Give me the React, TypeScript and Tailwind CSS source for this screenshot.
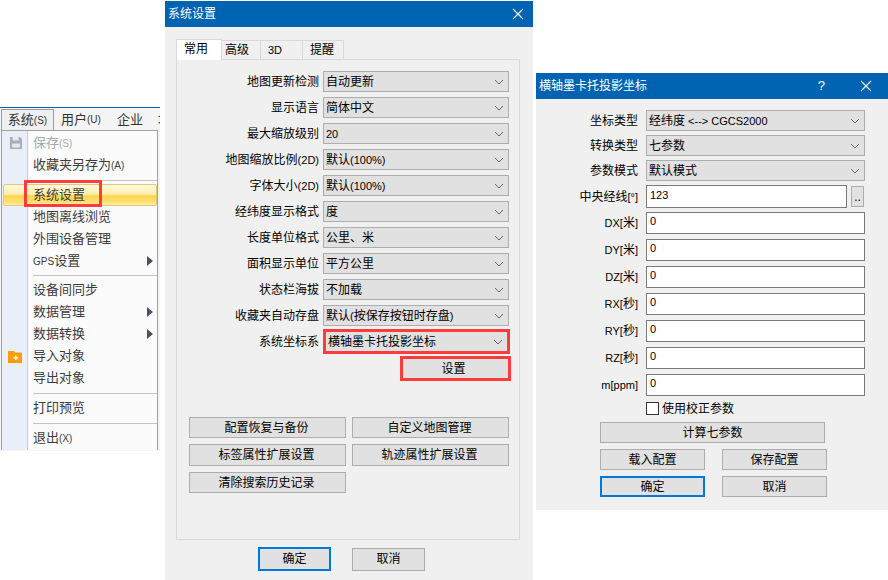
import { Fragment } from 'react';

const FONT = "font-['Liberation_Sans','Noto_Sans_CJK_SC',sans-serif]";

const GENERAL_ROWS = [
  { label: '地图更新检测', value: '自动更新' },
  { label: '显示语言', value: '简体中文' },
  { label: '最大缩放级别', value: '20' },
  { label: '地图缩放比例(2D)', value: '默认(100%)' },
  { label: '字体大小(2D)', value: '默认(100%)' },
  { label: '经纬度显示格式', value: '度' },
  { label: '长度单位格式', value: '公里、米' },
  { label: '面积显示单位', value: '平方公里' },
  { label: '状态栏海拔', value: '不加载' },
  { label: '收藏夹自动存盘', value: '默认(按保存按钮时存盘)' },
];

const PARAMS = ['DX[米]', 'DY[米]', 'DZ[米]', 'RX[秒]', 'RY[秒]', 'RZ[秒]', 'm[ppm]'];

// latin runs are a bit smaller than the CJK in these dialogs
function Txt({ text }: { text: string }) {
  const parts = text.split(/([\x20-\x7e°]+)/).filter(Boolean);
  return (
    <>
      {parts.map((part, i) =>
        /^[\x20-\x7e°]+$/.test(part) ? (
          <span key={i} className="text-[11px]">{part}</span>
        ) : (
          <Fragment key={i}>{part}</Fragment>
        ),
      )}
    </>
  );
}

function Chevron() {
  return (
    <svg width="10" height="6" viewBox="0 0 10 6" className="shrink-0">
      <path d="M1 1 L5 5 L9 1" fill="none" stroke="#666" strokeWidth="1" />
    </svg>
  );
}

function Select({ value, className }: { value: React.ReactNode; className: string }) {
  return (
    <div className={`flex items-center justify-between bg-[#e1e1e1] pl-[2px] pr-[4px] text-[12px] text-black ${className}`}>
      <span className="whitespace-nowrap">{value}</span>
      <Chevron />
    </div>
  );
}

function Btn({ text, className }: { text: string; className: string }) {
  return (
    <div className={`flex items-center justify-center bg-[#e1e1e1] text-[12px] text-black ${className}`}>
      {text}
    </div>
  );
}

function Input({ value, className }: { value: string; className: string }) {
  return (
    <div className={`flex items-center border border-[#7a7a7a] bg-white pb-[3px] pl-[3px] text-[11px] text-black ${className}`}>
      {value}
    </div>
  );
}

function TitleBar({ title, help }: { title: string; help?: boolean }) {
  return (
    <div className="flex h-[26px] shrink-0 items-center bg-[#0063b1] pl-[3px] text-[12px] text-white">
      <span className="flex-1">{title}</span>
      {help && <span className="mr-[35px] text-[13px]">?</span>}
      <svg width="12" height="12" viewBox="0 0 12 12" className={help ? 'mr-[16px]' : 'mr-[9px]'}>
        <path d="M1 1 L11 11 M11 1 L1 11" stroke="#fff" strokeWidth="1.1" />
      </svg>
    </div>
  );
}

function MenuItem({ text, hint, disabled, arrow, icon, active }: { text: React.ReactNode; hint?: string; disabled?: boolean; arrow?: boolean; icon?: React.ReactNode; active?: boolean }) {
  return (
    <div className="relative flex h-[22px] items-center">
      {active && (
        <div className="absolute inset-y-0 left-[1px] right-0 rounded-[2px] border border-[#e3c878] bg-[linear-gradient(#fff9dd_0%,#ffeeb0_45%,#ffd54f_55%,#ffdf70_85%,#fff0b8_100%)]" />
      )}
      <div className="relative flex w-[27px] shrink-0 justify-center">{icon}</div>
      <span className={`relative ml-[4px] text-[13px] ${disabled ? 'text-[#a8a8a8]' : 'text-[#3c3c3c]'}`}>
        {text}
        {hint && <span className="text-[10px]">{hint}</span>}
      </span>
      {arrow && (
        <svg width="6" height="10" viewBox="0 0 6 10" className="absolute left-[145px]">
          <path d="M0 0 L6 5 L0 10 Z" fill="#4a5060" />
        </svg>
      )}
    </div>
  );
}

function Sep({ className }: { className: string }) {
  return (
    <div className={`flex items-center pl-[31px] ${className}`}>
      <div className="h-px w-full bg-[#c4c4c4]" />
    </div>
  );
}

function SaveIcon() {
  return (
    <svg width="14" height="14" viewBox="0 0 14 14">
      <path d="M1 1 H11 L13 3 V13 H1 Z" fill="#a9adb2" />
      <rect x="3.5" y="1" width="6" height="3.5" fill="#e8eaec" />
      <rect x="3" y="7.5" width="8" height="4" fill="#e8eaec" />
    </svg>
  );
}

function FolderIcon() {
  return (
    <svg width="15" height="13" viewBox="0 0 15 13">
      <path d="M0 1 H6 L7.5 2.5 H14 V13 H0 Z" fill="#ff9d0a" />
      <path d="M7 5.5 H8.5 V7 H10 V8.5 H8.5 V10 H7 V8.5 H5.5 V7 H7 Z" fill="#fff" />
    </svg>
  );
}

function SystemMenu() {
  return (
    <div className="absolute left-0 top-[107px] h-[344px] w-[160px] overflow-hidden bg-[#f4f4f4]">
      <div className="h-px w-full bg-[#0063b1]" />
      <div className="flex h-[22px] items-end whitespace-nowrap pl-[1px] text-[13px] text-[#333]">
        <div className="flex h-[21px] w-[53px] shrink-0 items-center justify-center border border-b-0 border-[#9a9ea4] bg-[#eef0f2]">
          系统<span className="text-[10px]">(S)</span>
        </div>
        <div className="ml-[7px] flex h-[21px] shrink-0 items-center">
          用户<span className="text-[10px]">(U)</span>
        </div>
        <div className="ml-[16px] flex h-[21px] shrink-0 items-center">企业</div>
        <div className="ml-[15px] flex h-[21px] shrink-0 items-center">地</div>
      </div>
      <div className="relative ml-[1px] h-[320px] w-[157px] border-x border-t border-[#a0a0a0] bg-[#fbfbfb] pt-[1px]">
        <div className="absolute inset-y-0 left-0 w-[26px] bg-[#e9eff8]" />
        <div className="absolute inset-y-0 left-[25px] w-px bg-[#c9ccd2]" />
        <MenuItem text="保存" hint="(S)" disabled icon={<SaveIcon />} />
        <MenuItem text="收藏夹另存为" hint="(A)" />
        <Sep className="h-[8px]" />
        <MenuItem text="系统设置" active />
        <MenuItem text="地图离线浏览" />
        <MenuItem text="外围设备管理" />
        <MenuItem text={<><span className="text-[10px]">GPS</span>设置</>} arrow />
        <Sep className="h-[7px]" />
        <MenuItem text="设备间同步" />
        <MenuItem text="数据管理" arrow />
        <MenuItem text="数据转换" arrow />
        <MenuItem text="导入对象" icon={<FolderIcon />} />
        <MenuItem text="导出对象" />
        <Sep className="h-[8px]" />
        <MenuItem text="打印预览" />
        <Sep className="h-[8px]" />
        <MenuItem text="退出" hint="(X)" />
      </div>
      <div className="absolute left-[24px] top-[73px] h-[27px] w-[78px] border-[3px] border-[#ff3b3b]" />
    </div>
  );
}

function SettingsDialog() {
  return (
    <div className="absolute left-[165px] top-[1px] flex h-[579px] w-[368px] flex-col bg-[#f0f0f0]">
      <TitleBar title="系统设置" />
      <div className="ml-[11px] mt-[11px] flex h-[21px] items-end text-[12px] text-black">
        <div className="z-10 -mb-px flex h-[21px] w-[46px] items-center border border-b-0 border-[#d9d9d9] bg-white pb-[2px] pl-[7px]">常用</div>
        <div className="flex h-[19px] w-[39px] items-center border border-b-0 border-l-0 border-[#d9d9d9] pl-[3px]">高级</div>
        <div className="flex h-[19px] w-[42px] items-center border border-b-0 border-l-0 border-[#d9d9d9] pl-[7px] text-[11px]">3D</div>
        <div className="flex h-[19px] w-[41px] items-center border border-b-0 border-l-0 border-[#d9d9d9] pl-[7px]">提醒</div>
      </div>
      <div className="ml-[11px] flex h-[481px] w-[344px] flex-col border border-[#d9d9d9] pt-[11px]">
        <div className="flex flex-col gap-[5px]">
          {GENERAL_ROWS.map((row) => (
            <div key={row.label} className="flex h-[21px] items-center text-[12px] text-black">
              <div className="w-[142px] text-right"><Txt text={row.label} /></div>
              <Select value={<Txt text={row.value} />} className="ml-[4px] h-[21px] w-[186px] border border-[#adadad]" />
            </div>
          ))}
          <div className="flex h-[21px] items-center text-[12px] text-black">
            <div className="w-[142px] text-right">系统坐标系</div>
            <Select value="横轴墨卡托投影坐标" className="-my-[2px] ml-[4px] h-[25px] w-[187px] border-[3px] border-[#ff3b3b] pl-0 pr-[2px]" />
          </div>
        </div>
        <Btn text="设置" className="ml-[223px] mt-[4px] h-[25px] w-[111px] border-[3px] border-[#ff3b3b] pr-[4px]" />
        <div className="ml-[12px] mt-[36px] grid w-[320px] grid-cols-[157px_157px] gap-x-[6px] gap-y-[6px]">
          <Btn text="配置恢复与备份" className="h-[21px] border border-[#adadad] pr-[2px]" />
          <Btn text="自定义地图管理" className="h-[21px] border border-[#adadad] pr-[2px]" />
          <Btn text="标签属性扩展设置" className="h-[22px] border border-[#adadad] pr-[2px]" />
          <Btn text="轨迹属性扩展设置" className="h-[22px] border border-[#adadad] pr-[2px]" />
          <Btn text="清除搜索历史记录" className="h-[21px] border border-[#adadad] pr-[2px]" />
        </div>
      </div>
      <div className="ml-[93px] mt-[7px] flex items-center gap-[21px]">
        <Btn text="确定" className="h-[24px] w-[73px] border-2 border-[#0078d7]" />
        <Btn text="取消" className="h-[23px] w-[73px] border border-[#adadad]" />
      </div>
    </div>
  );
}

function FieldRow({ label, children, className }: { label: string; children: React.ReactNode; className?: string }) {
  return (
    <div className={`flex items-center text-[12px] text-black ${className ?? ''}`}>
      <div className="w-[102px] whitespace-nowrap text-right"><Txt text={label} /></div>
      <div className="ml-[8px] flex items-center">{children}</div>
    </div>
  );
}

function ProjectionDialog() {
  return (
    <div className="absolute left-[536px] top-[73px] flex h-[437px] w-[352px] flex-col bg-[#f0f0f0]">
      <TitleBar title="横轴墨卡托投影坐标" help />
      <div className="mt-[11px] flex flex-col gap-[4px]">
        <FieldRow label="坐标类型">
          <Select value={<Txt text="经纬度 <--> CGCS2000" />} className="h-[21px] w-[219px] border border-[#adadad]" />
        </FieldRow>
        <FieldRow label="转换类型">
          <Select value="七参数" className="h-[21px] w-[219px] border border-[#adadad]" />
        </FieldRow>
        <FieldRow label="参数模式">
          <Select value="默认模式" className="h-[21px] w-[219px] border border-[#adadad]" />
        </FieldRow>
        <FieldRow label="中央经线[°]">
          <Input value="123" className="h-[23px] w-[201px]" />
          <Btn text=".." className="ml-[4px] h-[21px] w-[13px] border border-[#adadad]" />
        </FieldRow>
      </div>
      <div className="mt-[4px] flex flex-col gap-[5px]">
        {PARAMS.map((name) => (
          <FieldRow key={name} label={name}>
            <Input value="0" className="h-[22px] w-[219px]" />
          </FieldRow>
        ))}
      </div>
      <div className="ml-[110px] mt-[6px] flex h-[13px] items-center text-[12px] text-black">
        <div className="h-[13px] w-[13px] border border-[#333] bg-white" />
        <span className="ml-[3px]">使用校正参数</span>
      </div>
      <div className="ml-[64px] mt-[7px] flex w-[227px] flex-col gap-[6px]">
        <Btn text="计算七参数" className="h-[21px] w-[225px] border border-[#adadad]" />
        <div className="flex gap-[17px]">
          <Btn text="载入配置" className="h-[21px] w-[105px] shrink-0 border border-[#adadad]" />
          <Btn text="保存配置" className="h-[21px] w-[105px] shrink-0 border border-[#adadad]" />
        </div>
        <div className="flex gap-[17px]">
          <Btn text="确定" className="h-[21px] w-[105px] shrink-0 border-2 border-[#0078d7]" />
          <Btn text="取消" className="h-[21px] w-[105px] shrink-0 border border-[#adadad]" />
        </div>
      </div>
    </div>
  );
}

export default function App() {
  return (
    <div className={`relative h-[580px] w-[888px] overflow-hidden bg-white ${FONT}`}>
      <SystemMenu />
      <SettingsDialog />
      <ProjectionDialog />
    </div>
  );
}
